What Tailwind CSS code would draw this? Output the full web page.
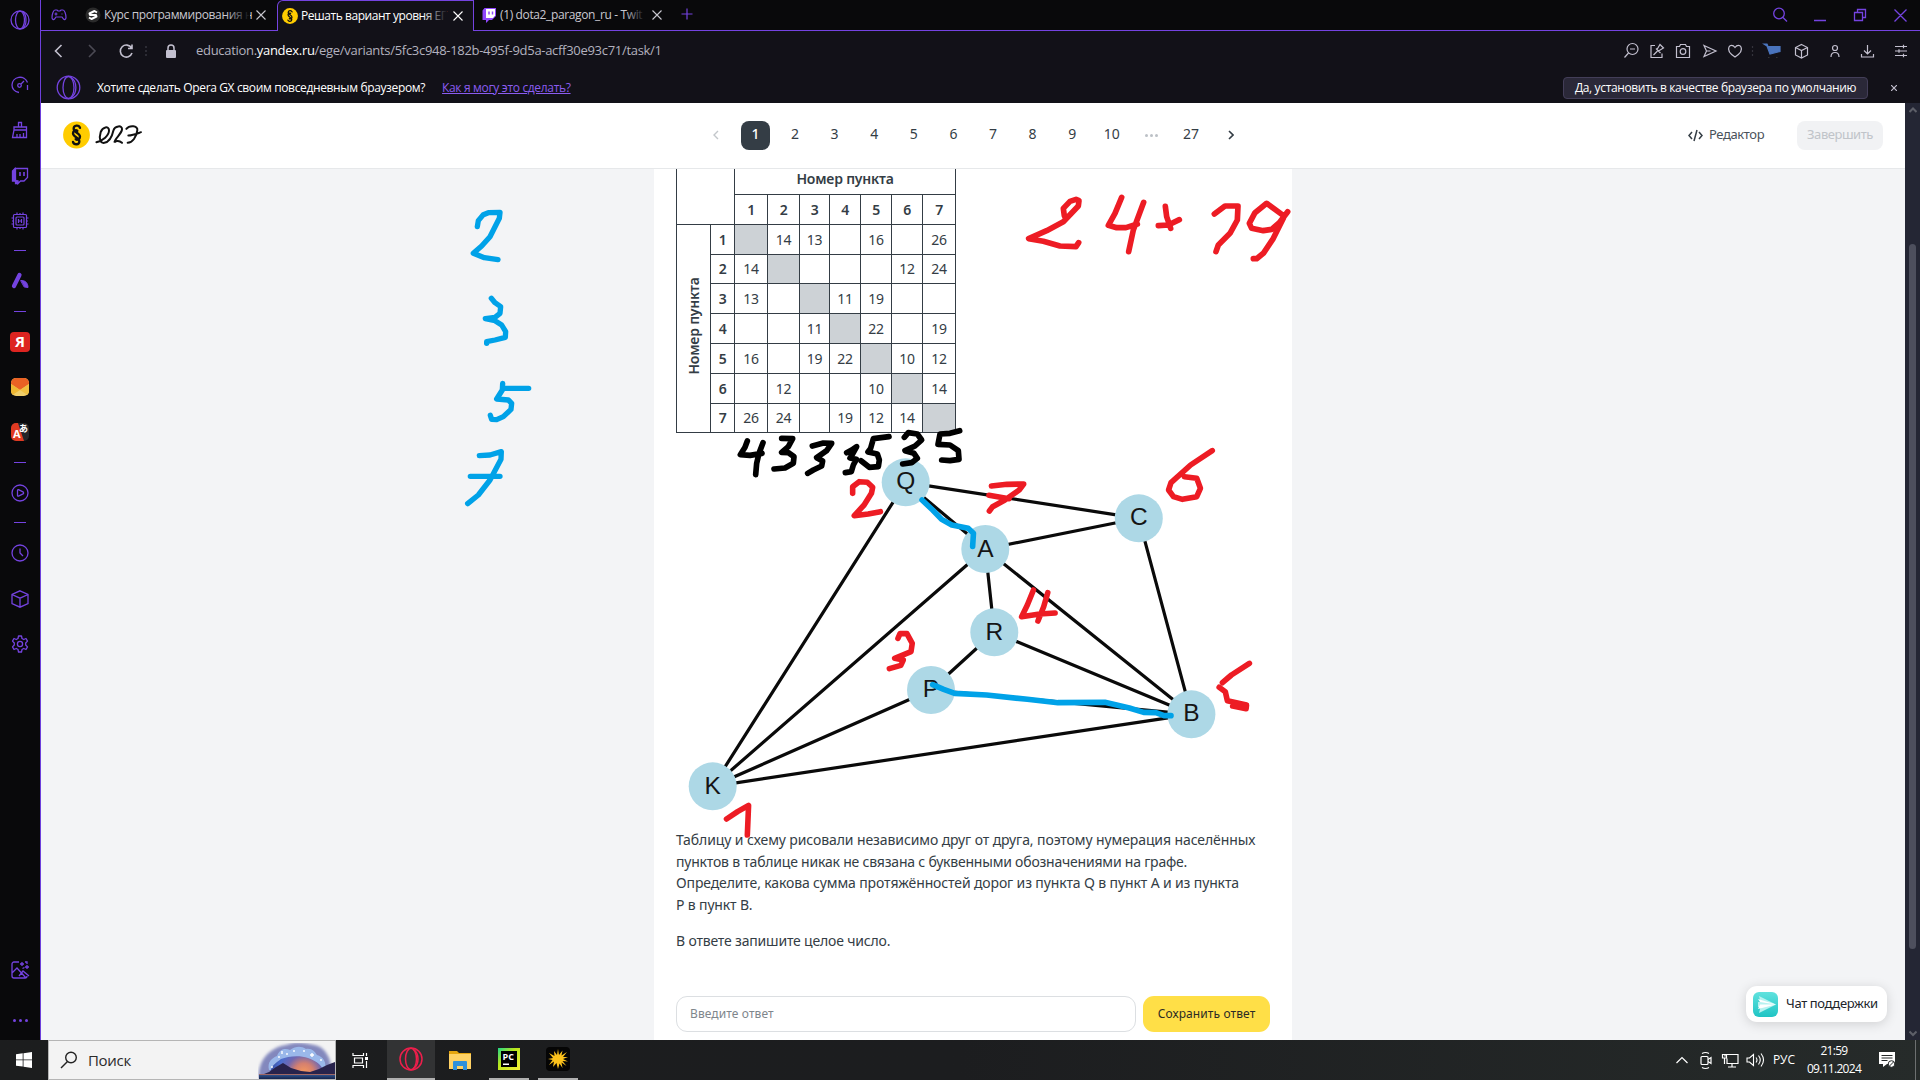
<!DOCTYPE html>
<html lang="ru">
<head>
<meta charset="utf-8">
<title>Решать вариант уровня ЕГЭ</title>
<script src="https://cdn.jsdelivr.net/npm/@tailwindcss/browser@4"></script>
</head>
<body class="w-[1920px] h-[1080px] overflow-hidden bg-black">
<div class="relative flex h-[1080px] w-[1920px] flex-col overflow-hidden font-['Open_Sans',sans-serif]">
<div class="flex h-[1040px]">

  <!-- Browser sidebar -->
  <aside class="flex w-[41px] flex-col items-center border-r border-[#6d3fdc] bg-[#09090b] text-[#7443e0] [&_svg]:fill-none [&_svg]:stroke-current">
    <div class="flex h-[40px] w-full items-center justify-center bg-[#09090b]"><svg width="20" height="20" viewBox="0 0 20 20" stroke-width="1.3"><circle cx="10" cy="10" r="9"/><ellipse cx="10" cy="10" rx="4.5" ry="8.8"/><path d="M13 2c4 3 4 13 0 16"/></svg></div>
    <div class="h-[22px]"></div>
    <div class="flex h-[46px] items-center"><svg width="18" height="18" viewBox="0 0 18 18" stroke-width="1.3"><path d="M8 16.5C3.500 15.500 1 12.500 1 9a8 8 0 0 1 15.500-2.500"/><circle cx="8.500" cy="9.500" r="1.800"/><path d="M10 8l3-3M16.500 9v5" /></svg></div>
    <div class="flex h-[45px] items-center pb-px"><svg width="18" height="18" viewBox="0 0 18 18" stroke-width="1.300"><path d="M7.500 6V1.500h3V6M3 6h12.500v3H3zM3 9l-1.500 7.500h14L15.500 9M6 16.500V13M9 16.500V13M12.500 16.500V12"/></svg></div>
    <div class="flex h-[45px] items-center"><svg width="18" height="18" viewBox="0 0 18 18" stroke-width="1.300"><path d="M4.500 1.500h12v9L13 14H9.500L7 16.500V14H4.500z"/><path d="M4 1.500L1.500 4v10h3v2.500h2L6 14H4.500z" class="fill-current"/><path d="M9 5v4M13 5v4" stroke-width="1.600"/></svg></div>
    <div class="flex h-[45px] items-center"><svg width="20" height="20" viewBox="0 0 20 20" stroke-width="1.200"><rect x="3.500" y="3.500" width="13" height="13" rx="1"/><rect x="6" y="6" width="8" height="8" rx="1"/><path d="M8.500 8v4M11.500 8v4M8.500 10h3M7 3.500V1.500M10 3.500V2M13 3.500V1.500M7 18.500v-2M10 18v-1.500M13 18.500v-2M1.500 7h2M2 10h1.500M1.500 13h2M16.500 7h2M16.500 10H18M16.500 13h2"/></svg></div>
    <div class="flex h-[15px] items-center"><div class="h-px w-3 bg-[#7443e0]"></div></div>
    <div class="flex h-[46px] items-center"><svg width="18" height="18" viewBox="0 0 18 18" stroke-linecap="round"><path d="M8.500 3L3 14" stroke-width="4.200"/><path d="M10 8.500c4-.5 7 2.500 7 7l-3.500-.5z" class="fill-current"/></svg></div>
    <div class="flex h-[15px] items-center"><div class="h-px w-3 bg-[#7443e0]"></div></div>
    <div class="flex h-[45px] items-center"><div class="flex h-5 w-5 items-center justify-center rounded bg-[#dd2420] text-[15px] font-bold leading-none text-white">Я</div></div>
    <div class="flex h-[45px] items-center"><div class="h-[18px] w-[18px] overflow-hidden rounded-[5px] bg-[#f0cf6a]"><svg width="18" height="18" viewBox="0 0 18 18" class="!stroke-none"><path d="M0 0h18v6L9 12 0 6z" fill="#ea6224"/><path d="M0 6l9 6-9 6z" fill="#eeb732"/><path d="M18 6l-9 6 9 6z" fill="#f1c040"/></svg></div></div>
    <div class="flex h-[46px] items-center"><div class="relative h-[18px] w-[18px] overflow-hidden rounded-[5px] bg-[#232528]"><svg class="!stroke-none" width="18" height="18" viewBox="0 0 18 18"><path d="M0 0h7l6 18H0z" fill="#e03a22"/></svg><span class="absolute left-[2px] top-[5px] text-[11px] font-bold leading-none text-white">A</span><span class="absolute left-[8px] top-[1px] font-['Noto_Sans_CJK_JP',sans-serif] text-[9px] font-bold leading-none text-white">あ</span></div></div>
    <div class="flex h-[15px] items-center"><div class="h-px w-3 bg-[#7443e0]"></div></div>
    <div class="flex h-[45px] items-center"><svg width="18" height="18" viewBox="0 0 18 18" stroke-width="1.300"><circle cx="9" cy="9" r="8"/><path d="M6.500 6.500c0-.8.5-1 1-.8l4.500 2.200c.8.5.8 1.500 0 2l-4.500 2.200c-.5.2-1 0-1-.6z"/></svg></div>
    <div class="flex h-[15px] items-center"><div class="h-px w-3 bg-[#7443e0]"></div></div>
    <div class="flex h-[46px] items-center"><svg width="18" height="18" viewBox="0 0 18 18" stroke-width="1.300"><circle cx="9" cy="9" r="8"/><path d="M9 4.500V9l3 3"/></svg></div>
    <div class="flex h-[45px] items-center"><svg width="18" height="18" viewBox="0 0 18 18" stroke-width="1.300"><path d="M9 .8l8 3.700v9L9 17.200l-8-3.700v-9zM1 4.500l8 3.700 8-3.700M9 8.200v9"/></svg></div>
    <div class="flex h-[45px] items-center"><svg width="18" height="18" viewBox="0 0 18 18" stroke-width="1.300" stroke-linejoin="round"><circle cx="9" cy="9" r="2.600"/><path d="M7.500 1h3l.5 2.500 1.700 1 2.300-1 1.500 2.600L14.700 8v2l1.800 1.900-1.500 2.600-2.300-1-1.700 1-.5 2.500h-3L7 14.500l-1.700-1-2.300 1-1.500-2.600L3.300 10V8L1.500 6.100 3 3.500l2.300 1 1.700-1z"/></svg></div>
    <div class="mt-auto flex h-[20px] items-center"><svg width="20" height="20" viewBox="0 0 20 20" stroke-width="1.300"><path d="M9 2H4a2 2 0 0 0-2 2v12a2 2 0 0 0 2 2h11a2 2 0 0 0 2-2M2 13l5-5 9 10M9 16l4-5 6 5M12.500 8.500l2-1M12 2v4M10 4h4M17 5v4M15 7h4M15 2h2v2"/></svg></div>
    <div class="mb-[12px] mt-[28px] flex h-[20px] items-center gap-[3px] pt-1"><i class="h-[3px] w-[3px] rounded-full bg-[#7443e0]"></i><i class="h-[3px] w-[3px] rounded-full bg-[#7443e0]"></i><i class="h-[3px] w-[3px] rounded-full bg-[#7443e0]"></i></div>
  </aside>

  <div class="flex w-[1879px] flex-col">
    <!-- Tabs -->
    <div class="flex h-[31px] bg-[#09090b] text-xs tracking-[-0.37px] text-[#c9c8d0]">
      <div class="flex w-[236px] items-center border-b border-[#7443e0] pl-[10px]">
        <svg class="mt-[-1px]" width="16" height="12" viewBox="0 0 16 12" fill="none" stroke="#7443e0" stroke-width="1.200"><path d="M4 1h2l1 1h2l1-1h2c1.500 0 3 4 3 7.500 0 2-1.500 2.500-2.500 1.500L11 8H5l-1.500 2C2.500 11 1 10.500 1 8.500 1 5 2.500 1 4 1z"/><path d="M5 3.500v3M3.500 5h3M10.500 5h1"/></svg>
        <svg class="ml-[18px]" width="16" height="16" viewBox="0 0 16 16"><circle cx="8" cy="8" r="7.500" fill="#2b2b2b"/><path d="M12 5.500L9.500 4 4.500 6.500 5 8l6 0 .5 1.500-5 2.500L4 10.500" fill="none" stroke="#fff" stroke-width="2" stroke-linejoin="round"/></svg>
        <span class="relative ml-[3px] w-[146px] whitespace-nowrap">Курс программирования н<i class="absolute inset-y-0 right-0 w-6 bg-gradient-to-r from-[#09090b]/0 to-[#09090b]"></i></span>
        <svg class="ml-[6px]" width="10" height="10" viewBox="0 0 10 10" stroke="#c9c8d0" stroke-width="1.100"><path d="M.5.5l9 9M9.500.5l-9 9"/></svg>
      </div>
      <div class="flex w-[197px] items-center rounded-tl-[6px] border-l border-r border-t border-[#7443e0] bg-[#121118] pl-[4px] text-white">
        <svg width="16" height="16" viewBox="0 0 27 27"><circle cx="13.500" cy="13.500" r="13.400" fill="#fc0"/><path d="M17 6.500C16 3.500 10.500 3.500 10.500 7.500C10.500 11.500 16.800 11.500 16.800 15.500C16.800 18 14 19 12.500 18M10 20.500C11 23.500 16.500 23.500 16.500 19.500C16.500 15.500 10.200 15.500 10.200 11.500C10.200 9 13 8 14.500 9" fill="none" stroke="#111" stroke-width="2.200" stroke-linecap="round"/></svg>
        <span class="relative ml-[3px] w-[146px] whitespace-nowrap tracking-[-0.45px]">Решать вариант уровня ЕГ<i class="absolute inset-y-0 right-0 w-6 bg-gradient-to-r from-[#121118]/0 to-[#121118]"></i></span>
        <svg class="ml-[6px]" width="10" height="10" viewBox="0 0 10 10" stroke="#fff" stroke-width="1.100"><path d="M.5.5l9 9M9.500.5l-9 9"/></svg>
      </div>
      <div class="flex flex-1 items-center border-b border-[#7443e0] pl-[7px]">
        <svg width="16" height="16" viewBox="0 0 16 16"><path d="M3.500 1H15v8l-4 4H8l-3 3v-3H1.500V3.500z" fill="#9147ff"/><path d="M5 2h9v6.500L12 11H5z" fill="#fff"/><path d="M8 4.500v3M11.500 4.500v3" stroke="#9147ff" stroke-width="1.500"/></svg>
        <span class="relative ml-[3px] w-[145px] whitespace-nowrap">(1) dota2_paragon_ru - Twit<i class="absolute inset-y-0 right-0 w-5 bg-gradient-to-r from-[#09090b]/0 to-[#09090b]"></i></span>
        <svg class="ml-[7px]" width="10" height="10" viewBox="0 0 10 10" stroke="#c9c8d0" stroke-width="1.100"><path d="M.5.5l9 9M9.500.5l-9 9"/></svg>
        <svg class="ml-[19px] mt-[-3px]" width="12" height="12" viewBox="0 0 12 12" stroke="#7443e0" stroke-width="1.200"><path d="M6 .5v11M.5 6h11"/></svg>
        <svg class="ml-auto mr-[12px] mt-[-1px]" width="136" height="16" viewBox="0 0 136 16" fill="none" stroke="#7443e0" stroke-width="1.300"><circle cx="7" cy="6.500" r="5.300"/><path d="M11 10.500l4 4M42 13.500h12M82.500 5.500h8v8h-8zM85.500 5.500v-3h8v8h-3M122.500 2.500l12 12M134.500 2.500l-12 12"/></svg>
      </div>
    </div>

    <!-- Address bar -->
    <div class="flex h-[41px] items-center bg-[#121118] pb-px pl-[12px] pr-[12px]">
      <svg width="96" height="18" viewBox="0 0 96 18" fill="none" stroke="#c3c0cf" stroke-width="1.600"><path d="M8.500 3L2.500 9l6 6"/><path d="M36 3l6 6-6 6" stroke="#4b4a54"/><path d="M78.500 6A6 6 0 1 0 79 11M79 2.500v4h-4"/><path d="M93 4v2M93 8v2M93 12v2" stroke="#34333c"/></svg>
      <svg class="ml-[16px]" width="12" height="15" viewBox="0 0 12 15"><rect x="1" y="6" width="10" height="8" rx="1" fill="#c3c0cf"/><path d="M3 6.500V4a3 3 0 0 1 6 0v2.500" fill="none" stroke="#c3c0cf" stroke-width="1.500"/></svg>
      <span class="ml-[19px] whitespace-nowrap text-[13px] tracking-[-0.3px] text-[#b3b1bf]">education.<span class="text-white">yandex.ru</span>/ege/variants/5fc3c948-182b-495f-9d5a-acff30e93c71/task/1</span>
      <svg class="ml-auto" width="284" height="20" viewBox="0 0 284 20" fill="none" stroke="#c3c0cf" stroke-width="1.200">
        <circle cx="8.500" cy="8" r="5.500"/><path d="M4.500 12l-4 4.500M6 8h5"/>
        <path d="M31 4.500h-4v12h11v-4M29.500 14l4-4M32 7.500l4.500 4.500M33 8.500l3-5 3.500 3.500-5 3"/>
        <path d="M52.500 5.500h3l1-2h5l1 2h3v11h-13z"/><circle cx="59" cy="10.500" r="2.800"/>
        <path d="M80 4.500l12 5.500-12 5.500 2.500-5.500zM82.500 10h4"/>
        <path d="M111 16c-7-4.500-7-8-6-10s4-2.500 6 .5c2-3 5-2.500 6-.5s1 5.500-6 10z"/>
        <path d="M128.500 5v2M128.500 9v2M128.500 13v2" stroke="#34333c"/>
        <path d="M140 3h3l1 2.500h12v5L146 13l-3-8z" fill="#4a74bd" stroke="#4a74bd"/><path d="M144 16.500h1.500M152 16.500h1.500" stroke="#333"/>
        <path d="M177.500 3.500l6 3v7.500l-6 3-6-3V6.500zM171.500 6.500l6 3 6-3M177.500 9.500v7.500"/>
        <circle cx="211" cy="7" r="2.500"/><path d="M207 16c0-6 8-6 8 0"/>
        <path d="M243.500 4v8.500M240 9.500l3.500 3.500 3.500-3.500M237.500 13v3h12v-3"/>
        <path d="M271 5.500h12M271 10h12M271 14.500h12M279.500 3.800v3.500M275 8.300v3.500M279.500 12.800v3.500"/>
      </svg>
    </div>

    <!-- Default browser prompt -->
    <div class="flex h-[31px] items-center bg-[#121118] text-xs text-white">
      <svg class="ml-[15px]" width="25" height="25" viewBox="0 0 25 25" fill="none" stroke="#7443e0" stroke-width="1.300"><circle cx="12.500" cy="12.500" r="11.300"/><ellipse cx="12.500" cy="12.500" rx="5.500" ry="11"/><path d="M15 2.500c6.500 4 6.500 16 0 20"/></svg>
      <span class="ml-[16px] whitespace-nowrap tracking-[-0.36px]">Хотите сделать Opera GX своим повседневным браузером?</span>
      <span class="ml-[17px] whitespace-nowrap tracking-[-0.33px] text-[#8b5cf0] underline">Как я могу это сделать?</span>
      <span class="ml-auto flex h-[22px] w-[305px] items-center justify-center whitespace-nowrap rounded border border-[#433e58] bg-[#2a2838] tracking-[-0.36px]">Да, установить в качестве браузера по умолчанию</span>
      <svg class="ml-[23px] mr-[23px]" width="6" height="6" viewBox="0 0 6 6" stroke="#c3c0cf" stroke-width="1.200"><path d="M0 0l6 6M6 0L0 6"/></svg>
    </div>

    <!-- Page -->
    <div class="flex h-[937px]">
      <div class="flex w-[1864px] flex-col bg-[#f3f4f6] font-['Noto_Sans',sans-serif] text-[#343d45]">
        <header class="flex h-[66px] shrink-0 items-center border-b border-[#e6e8ea] bg-white pb-px">
          <svg class="ml-[20px]" width="90" height="30" viewBox="61 120.500 90 30"><circle cx="76.500" cy="135.500" r="13.400" fill="#fc0"/><g transform="translate(60 0) scale(.33333)" fill="none" stroke="#111" stroke-width="7" stroke-linecap="round"><path d="M60 385C57 376 41 376 41 388C41 400 60 400 60 412C60 420 51 423 47 419M39 427C42 437 58 437 58 425C58 413 39 413 39 401C39 393 48 390 52 394"/><path stroke-width="6" d="M109 428C128 424 148 408 147 392C146 378 128 382 122 398C116 418 121 432 133 430C146 428 156 412 160 394C164 378 188 376 186 390C184 404 165 416 163 429C168 422 178 423 186 430"/><path stroke-width="6" d="M199 388C209 376 234 378 232 392C230 412 217 430 203 430M205 408C218 408 232 402 243 398"/></g></svg>
          <nav class="ml-[545px] grid w-[554.400px] grid-cols-14 items-center justify-items-center text-sm leading-[18px] [&>span:not(.p)]:-mt-[3px]">
            <svg width="6" height="10" viewBox="0 0 6 10" fill="none" stroke="#c3c7cb" stroke-width="1.400"><path d="M5 1L1 5l4 4"/></svg>
            <span class="p flex h-[29px] w-[29px] items-center justify-center rounded-lg bg-[#343d45] pb-[3px] font-medium text-white">1</span>
            <span>2</span><span>3</span><span>4</span><span>5</span><span>6</span><span>7</span><span>8</span><span>9</span><span>10</span>
            <span class="p flex gap-[2px]"><i class="h-[3px] w-[3px] rounded-full bg-[#bcc1c6]"></i><i class="h-[3px] w-[3px] rounded-full bg-[#bcc1c6]"></i><i class="h-[3px] w-[3px] rounded-full bg-[#bcc1c6]"></i></span>
            <span>27</span>
            <svg width="6" height="10" viewBox="0 0 6 10" fill="none" stroke="#343d45" stroke-width="1.600"><path d="M1 1l4 4-4 4"/></svg>
          </nav>
          <svg class="ml-auto" width="15" height="13" viewBox="0 0 15 13" fill="none" stroke="#343d45" stroke-width="1.500"><path d="M4 3L1 6.500 4 10M11 3l3 3.500-3 3.500M9 1L6 12"/></svg>
          <span class="-mt-px ml-[6px] w-[56px] whitespace-nowrap text-[13px] tracking-[-0.4px] text-[#4a525a]">Редактор</span>
          <span class="ml-[32px] mr-[22px] flex h-[29px] w-[86px] items-center justify-center rounded-lg bg-[#f1f2f4] pb-px text-[13px] tracking-[-0.45px] text-[#c0c4c9]">Завершить</span>
        </header>

        <main class="ml-[613px] flex h-[871px] w-[638px] flex-col bg-white pl-[22px]">
          <!-- Distance table -->
          <div class="grid w-[280px] shrink-0 grid-cols-[34px_24px_33px_32px_30px_31px_31px_31px_33px] grid-rows-[26px_30px_30px_29px_30px_30px_30px_30px_29px] border-l border-[#343d45] text-sm tracking-[-0.3px] [&>*]:flex [&>*]:items-center [&>*]:justify-center [&>*]:border-b [&>*]:border-r [&>*]:border-[#343d45] [&>*]:leading-none [&>b]:font-semibold">
            <span class="col-span-2 row-span-2 h-[56px]"></span>
            <b class="col-span-7 pb-[5px] tracking-[-0.2px]">Номер пункта</b>
            <b>1</b><b>2</b><b>3</b><b>4</b><b>5</b><b>6</b><b>7</b>
            <b class="row-span-7 pb-[5px] tracking-[-0.2px]"><span class="-rotate-90 whitespace-nowrap">Номер пункта</span></b>
            <b>1</b><span class="bg-[#cdd2d6]"></span><span>14</span><span>13</span><span></span><span>16</span><span></span><span>26</span>
            <b>2</b><span>14</span><span class="bg-[#cdd2d6]"></span><span></span><span></span><span></span><span>12</span><span>24</span>
            <b>3</b><span>13</span><span></span><span class="bg-[#cdd2d6]"></span><span>11</span><span>19</span><span></span><span></span>
            <b>4</b><span></span><span></span><span>11</span><span class="bg-[#cdd2d6]"></span><span>22</span><span></span><span>19</span>
            <b>5</b><span>16</span><span></span><span>19</span><span>22</span><span class="bg-[#cdd2d6]"></span><span>10</span><span>12</span>
            <b>6</b><span></span><span>12</span><span></span><span></span><span>10</span><span class="bg-[#cdd2d6]"></span><span>14</span>
            <b>7</b><span>26</span><span>24</span><span></span><span>19</span><span>12</span><span>14</span><span class="bg-[#cdd2d6]"></span>
          </div>

          <!-- Road graph -->
          <svg class="shrink-0" width="610" height="396" viewBox="676 433 610 396">
            <g stroke="#0a0a0a" stroke-width="3.200">
              <path d="M905.700 482.300L1138.800 518.300M905.700 482.300L985.300 549M905.700 482.300L712.700 786.300M985.300 549L1138.800 518.300M985.300 549L994.300 632.300M985.300 549L1191.400 714.300M985.300 549L712.700 786.300M994.300 632.300L1191.400 714.300M994.300 632.300L931 690M931 690L1191.400 714.300M931 690L712.700 786.300M712.700 786.300L1191.400 714.300M1138.800 518.300L1191.400 714.300"/>
            </g>
            <g fill="#add8e6"><circle cx="905.700" cy="482.300" r="24"/><circle cx="1138.800" cy="518.300" r="24"/><circle cx="985.300" cy="549" r="24"/><circle cx="994.300" cy="632.300" r="24"/><circle cx="931" cy="690" r="24"/><circle cx="1191.400" cy="714.300" r="24"/><circle cx="712.700" cy="786.300" r="24"/></g>
            <g font-family="Liberation Sans" font-size="24.500" text-anchor="middle" fill="#151515"><text x="905.700" y="489">Q</text><text x="1138.800" y="525">C</text><text x="985.300" y="556.500">A</text><text x="994.300" y="639.500">R</text><text x="931" y="697">P</text><text x="1191.400" y="721.300">B</text><text x="712.700" y="793.500">K</text></g>
          </svg>

          <div class="whitespace-nowrap text-sm leading-[21.670px]">
            <p class="tracking-[-0.1px]">Таблицу и схему рисовали независимо друг от друга, поэтому нумерация населённых</p>
            <p class="tracking-[-0.21px]">пунктов в таблице никак не связана с буквенными обозначениями на графе.</p>
            <p class="tracking-[-0.13px]">Определите, какова сумма протяжённостей дорог из пункта Q в пункт A и из пункта</p>
            <p class="tracking-[-0.15px]">P в пункт B.</p>
            <p class="mt-[14px] tracking-[-0.18px]">В ответе запишите целое число.</p>
          </div>
          <div class="mb-[8px] mt-auto flex gap-[7px] text-xs">
            <div class="flex h-[36px] w-[460px] items-center rounded-[11px] border border-[#dcdfe2] pl-[13px] tracking-[0.1px] text-[#80868c]">Введите ответ</div>
            <div class="flex h-[36px] w-[127px] items-center justify-center rounded-[11px] bg-[#ffdf47] tracking-[0.1px] text-[#2b2b25]">Сохранить ответ</div>
          </div>
        </main>
      </div>

      <!-- Scrollbar -->
      <div class="flex w-[15px] flex-col items-center bg-[#242634]">
        <svg class="mt-[3px]" width="8" height="8" viewBox="0 0 8 8" fill="none" stroke="#5d5f68" stroke-width="2"><path d="M.5 6L4 2.500 7.500 6"/></svg>
        <div class="mt-[130px] h-[705px] w-[7px] rounded-full bg-[#4d4f5d]"></div>
        <svg class="mb-[3px] mt-auto" width="8" height="8" viewBox="0 0 8 8" fill="none" stroke="#5d5f68" stroke-width="2"><path d="M.5 2.500L4 6l3.500-3.500"/></svg>
      </div>
    </div>
  </div>
</div>

<!-- Windows taskbar -->
<footer class="flex h-[40px] items-center bg-gradient-to-r from-[#1c1d1e] via-[#1c1d1f] to-[#262b2a] text-white">
  <div class="flex w-[48px] justify-center"><svg width="16" height="16" viewBox="0 0 16 16" fill="#fff"><path d="M0 2.200L6.700 1.300v6.200H0zM7.500 1.200L16 0v7.500H7.500zM0 8.300h6.700v6.300L0 13.700zM7.500 8.300H16V16l-8.500-1.200z"/></svg></div>
  <div class="flex h-[40px] w-[288px] items-center overflow-hidden border border-[#b5b5b5] bg-[#f3f3f3] pl-[11px] text-[#2b2b2b]">
    <svg width="18" height="18" viewBox="0 0 18 18" fill="none" stroke="#222" stroke-width="1.400"><circle cx="11" cy="6.500" r="5.300"/><path d="M7.500 10.500L1 17"/></svg>
    <span class="ml-[10px] text-[15px] tracking-[-0.3px]">Поиск</span>
    <svg class="ml-auto mt-[2px]" width="77" height="36" viewBox="0 0 77 36">
      <defs><radialGradient id="glow" gradientUnits="userSpaceOnUse" cx="46" cy="30" r="32"><stop offset="0" stop-color="#f79a5c"/><stop offset=".3" stop-color="#d5806f"/><stop offset=".55" stop-color="#7168b0"/><stop offset=".8" stop-color="#4c6fd0"/><stop offset="1" stop-color="#3c55a8"/></radialGradient><linearGradient id="lake" x2="0" y2="1"><stop stop-color="#d87555"/><stop offset=".3" stop-color="#2b4a80"/><stop offset="1" stop-color="#14234d"/></linearGradient><filter id="soft"><feGaussianBlur stdDeviation="1.500"/></filter></defs>
      <path d="M1 36C-1 18 12 4 28 2c10-4 20-2 28 0 9 1 14 9 16 16l3 18z" fill="#7076b4" opacity=".85" filter="url(#soft)"/>
      <path d="M11 27C9 19 14 15 19 13c3-8 9-8 13-6 6-4 11-4 16-1 6-1 9 3 11 6 6 2 10 6 8 17z" fill="#9ab8ea"/>
      <path d="M12 31c1-9 6-11 11-15 7-3 19-4 27-1 9 3 15 8 16 15z" fill="url(#glow)"/>
      <path d="M1 33l10-4 7-5 7-4 8 5 10 3 9 1 9-3 8-4 8-3v14H1z" fill="#28234c"/><path d="M1 31h76v5H1z" fill="url(#lake)"/>
      <path d="M24 8v3M29 10v2M21 13v2M36 7v2M46 7v2M54 10v4M52 12h4M63 16v2M14 23v2" stroke="#fff" stroke-width="1.400"/>
    </svg>
  </div>
  <div class="flex w-[51px] justify-center pr-[3px]"><svg width="17" height="17" viewBox="0 0 17 17" fill="none" stroke="#fff" stroke-width="1.200"><path d="M1 4V1M1 3.500h10.500V1M1 16v-3M1 13.500h10.500V16M2.500 6h8v5h-8zM14.500 1v3M14.500 9v7"/><path d="M13 5h3v3h-3z" fill="#fff" stroke="none"/></svg></div>
  <div class="flex h-[40px] w-[48px] items-center justify-center border-b-2 border-[#b0b0b0] bg-[#323334]"><svg width="24" height="24" viewBox="0 0 24 24" fill="none" stroke="#ee1f4c" stroke-width="1.500"><circle cx="12" cy="12" r="11"/><ellipse cx="12" cy="12" rx="5.500" ry="10.800"/><path d="M14.500 2.500c6 4 6 15 0 19"/></svg></div>
  <div class="flex w-[50px] justify-center"><svg width="22" height="22" viewBox="0 0 22 22"><path d="M0 2h8l2 2h12v16H0z" fill="#e5a50f"/><path d="M0 5h22v15H0z" fill="#ffd265"/><path d="M4 13q0-1 1-1h12q1 0 1 1v8h-4v-4H8v4H4z" fill="#2f91dc"/></svg></div>
  <div class="ml-[4px] flex h-[40px] w-[40px] items-center justify-center border-b-2 border-[#b0b0b0]"><svg width="22" height="22" viewBox="0 0 22 22"><defs><linearGradient id="pc" x2="1" y2="1"><stop stop-color="#21d789"/><stop offset=".4" stop-color="#b8e61c"/><stop offset="1" stop-color="#f6f03a"/></linearGradient></defs><path d="M0 0h22v22H0z" fill="url(#pc)"/><path d="M3 3h16v16H3z" fill="#000"/><text x="4.500" y="12" font-size="9" font-weight="700" fill="#fff" font-family="Open Sans">PC</text><path d="M5 15.500h6v1.500H5z" fill="#fff"/></svg></div>
  <div class="ml-[9px] flex h-[40px] w-[40px] items-center justify-center border-b-2 border-[#b0b0b0]"><svg width="24" height="24" viewBox="0 0 24 24"><rect width="24" height="24" rx="4" fill="#050505"/><path d="M12 2l1 6 3.500-4.500-1 5L21 5l-4 5 5 0-5 2 5 2.500-5.500-.5 4 5-5-3.500 1 5.500-3-4.500L12 22l-1.500-6L7 20l1-5.500L3 18l3.500-5L2 12l5-1-4-5 5.500 3L8 4l3 4z" fill="#fcc21c"/></svg></div>
  <svg class="ml-auto mr-px" width="90" height="20" viewBox="0 0 90 20" fill="none" stroke="#fff" stroke-width="1.200">
    <path d="M1.500 13L7 7.500l5.500 5.500"/>
    <rect x="26" y="6.500" width="7" height="8" rx="1"/><path d="M33 9.500l3-2v6l-3-2M27 3.500q3.500-2 7 0M27 17.500q3.500 2 7 0"/>
    <path d="M50 6.500V4.500h13v9H52v-5M57 13.500v3.500M53 17h8M47.500 4.500h4v3.500h-4zM49.500 8v6"/>
    <path d="M72 8h2.500l4-3.500v11l-4-3.500H72zM81 7.500q2 2.500 0 5M83.500 5.500q3.500 4.500 0 9M86 3.500q5 6.500 0 13" stroke-width="1.100"/>
  </svg>
  <span class="ml-[7px] w-[24px] text-xs tracking-[-0.1px]">РУС</span>
  <div class="ml-[9px] flex w-[56px] flex-col items-center whitespace-nowrap text-xs leading-[18px] tracking-[-0.7px]"><span>21:59</span><span>09.11.2024</span></div>
  <svg class="ml-[16px]" width="18" height="18" viewBox="0 0 18 18"><path d="M1 1h16v12H9l-4 3v-3H1z" fill="#fff"/><path d="M3.500 4.500h11M3.500 7h11M3.500 9.500h6" stroke="#242828"/><circle cx="13.500" cy="13" r="3.300" fill="#fff" stroke="#242828"/><path d="M11.500 15l4-4" stroke="#242828"/></svg>
  <div class="ml-[19px] mr-[4px] h-[40px] w-px bg-[#6d7070]"></div>
</footer>

<!-- Support chat button floating over the page -->
<div class="absolute left-[1746px] top-[986px] flex h-[36px] w-[141px] items-center rounded-[11px] bg-white pl-[7px] font-['Noto_Sans',sans-serif] text-[13px] tracking-[-0.36px] text-[#20242a] shadow-[0_2px_12px_rgba(0,0,0,0.15)]">
  <svg width="25" height="25" viewBox="0 0 25 25"><defs><linearGradient id="chat" x2="0" y2="1"><stop stop-color="#60e2de"/><stop offset="1" stop-color="#1fc4c4"/></linearGradient></defs><rect width="25" height="25" rx="6" fill="url(#chat)"/><path d="M6 4l17 8.500L6 21l1.500-6H5v-5h2.500z" fill="#b6f2f0"/><path d="M5 7l18 5.500L7 10zM5 17l18-4.500H7z" fill="#fff"/></svg>
  <span class="ml-[8px] whitespace-nowrap">Чат поддержки</span>
</div>

<!-- Pen annotations drawn over the screen -->
<svg class="pointer-events-none absolute inset-0" width="1920" height="1080" viewBox="0 0 1920 1080" fill="none" stroke-width="5.600" stroke-linecap="round" stroke-linejoin="round">
  <g stroke="#00a2e8" transform="translate(440 190) scale(.33333)" stroke-width="16">
    <path d="M112 110L115 92L130 74L145 68L180 67L178 85L150 140L125 168L100 190L133 203L174 209"/>
    <path d="M154 325L165 338L182 350L180 370L165 382L136 386L165 392L185 405L197 425L196 442L165 450L140 455V460"/>
    <path d="M188 580L187 600L170 627L205 630L215 640L213 658L190 680L170 689L155 688L151 676M198 595H266"/>
    <path d="M118 797L150 795L184 785L183 808L150 870L115 915L83 941M91 859H180"/>
  </g>
  <g stroke="#ed1c24" transform="translate(1000 170) scale(.33333)" stroke-width="17">
    <path d="M193 138L190 115L210 94L228 88L237 92L235 108L190 155L140 182L86 206L130 214L180 228L228 230L236 218"/>
    <path d="M365 82L345 130L325 166L350 173L378 173L412 162M431 97L400 180L386 245"/>
    <path d="M496 109L500 140L512 175M475 167L505 165L538 149"/>
    <path d="M643 132L675 108H714L712 150L690 190L655 225L648 245"/>
    <path d="M863 125L838 158L815 178L790 182L755 175L748 160L765 128L800 100L848 135M850 145L820 205L790 250L770 266H760"/>
  </g>
  <g stroke="#000" transform="translate(660 160) scale(.33333)" stroke-width="17">
    <path d="M262 843L255 862L241 884L270 886L306 880M309 848L297 880L290 910L287 944"/>
    <path d="M365 835L398 836L385 860L365 877L385 878L402 890L400 910L375 924L342 927"/>
    <path d="M457 858L490 849L515 850L500 872L470 893L488 903L485 918L460 930L443 940"/>
    <path d="M560 878L575 870L590 860L578 882L570 894L589 898L580 915L574 935L556 938"/>
    <path d="M687 830L640 836L632 865L624 876L652 882L658 900L655 920L628 922L603 902"/>
    <path d="M733 832L745 818L772 822L785 840L765 858L735 872L762 880L772 895L755 908L728 912"/>
    <path d="M899 812L870 820L840 822L834 853L870 855L895 872L897 898L870 902L845 900"/>
  </g>
  <g stroke="#ed1c24">
    <g transform="translate(660 430) scale(.40816 .33333)">
      <path vector-effect="non-scaling-stroke" d="M472 190L472 170L488 155L508 157L521 172L518 190L500 225L476 257L510 252L540 245"/>
      <path vector-effect="non-scaling-stroke" d="M812 168L850 163L891 162L880 180L845 210L815 230L807 243M806 196L855 206"/>
      <path vector-effect="non-scaling-stroke" d="M1353 62L1300 105L1252 158L1246 180L1258 200L1280 208L1315 200L1324 175L1315 145L1285 140"/>
      <path vector-effect="non-scaling-stroke" d="M915 480L900 525L886 560L930 552L968 549M950 488L940 530L926 573"/>
      <path vector-effect="non-scaling-stroke" d="M583 625L588 611L605 611L618 640L615 665L575 685L596 690L590 706L562 716"/>
      <path vector-effect="non-scaling-stroke" d="M1444 700L1400 735L1378 758M1370 772L1385 785L1390 812L1437 825L1436 836L1403 828"/>
      <path vector-effect="non-scaling-stroke" d="M163 1167L190 1145L217 1126L214 1215"/>
      <g stroke="#00a2e8">
        <path vector-effect="non-scaling-stroke" d="M642 210L668 240L690 268L715 285L755 295L768 310L766 349"/>
        <path vector-effect="non-scaling-stroke" d="M668 764L695 778L722 790L800 795L900 808L975 818L1090 817L1150 834L1185 847L1215 848L1235 857H1252"/>
      </g>
    </g>
  </g>
</svg>
</div>
</body>
</html>
